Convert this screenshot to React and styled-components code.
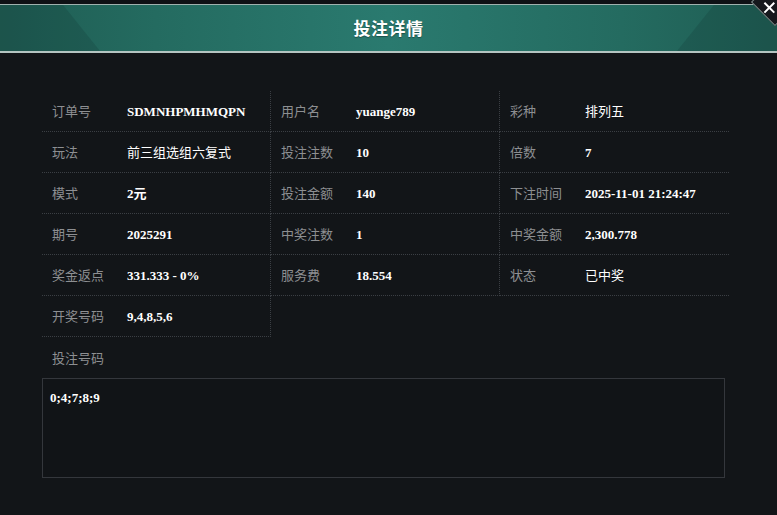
import React from "react";
import styled, { createGlobalStyle } from "styled-components";

const GlobalStyle = createGlobalStyle`
  html, body { margin: 0; padding: 0; background: #121518; }
  body { font-family: "Noto Sans CJK SC", "Noto Sans", sans-serif; }
`;

const Dialog = styled.div`
  position: relative;
  width: 777px;
  height: 515px;
  overflow: hidden;
  background: #121518;
`;

const TopStrip = styled.div`
  height: 4px;
  background: #0f1115;
`;

const Header = styled.div`
  position: relative;
  height: 46px;
  display: flex;
  align-items: center;
  justify-content: center;
  border-top: 1px solid #9fb1ae;
  border-bottom: 2px solid #b4c4c1;
  background: linear-gradient(90deg, #1f5d53 0%, #246b60 20%, #2a7a6f 50%, #246b60 80%, #1f5d53 100%);
  overflow: hidden;

  &::before, &::after {
    content: "";
    position: absolute;
    top: 0;
    bottom: 0;
    width: 110px;
    background: rgba(10, 40, 36, 0.16);
  }
  &::before {
    left: 0;
    clip-path: polygon(0 0, 63px 0, 100px 100%, 0 100%);
  }
  &::after {
    right: 0;
    clip-path: polygon(47px 0, 110px 0, 110px 100%, 10px 100%);
  }
`;

const Title = styled.h1`
  position: relative;
  z-index: 1;
  margin: 0 0 1px;
  font-size: 17px;
  font-weight: 700;
  color: #ffffff;
  letter-spacing: 0.5px;
  text-shadow: 0 1px 1px rgba(0, 0, 0, 0.35);
`;

const CloseButton = styled.button`
  position: absolute;
  left: 758px;
  top: -15px;
  width: 34px;
  height: 34px;
  padding: 0;
  transform: rotate(45deg);
  background: #16181d;
  border: 1px solid #7d8c8a;
  box-sizing: border-box;
  cursor: pointer;
  z-index: 2;
`;

const CloseGlyph = styled.svg`
  position: absolute;
  left: 50%;
  top: 50%;
  width: 16px;
  height: 16px;
  margin-left: -8px;
  margin-top: 0px;
`;

const Body = styled.div`
  padding: 38px 48px 0 42px;
`;

const Grid = styled.div`
  display: grid;
  grid-template-columns: repeat(3, 1fr);
`;

const Cell = styled.div`
  height: 41px;
  line-height: 37px;
  box-sizing: border-box;
  padding-left: 10px;
  white-space: nowrap;
  border-bottom: 1px dotted #3b3f44;
  border-right: ${(p) => (p.$last ? "none" : "1px dotted #3b3f44")};
`;

const Label = styled.span`
  display: inline-block;
  width: 75px;
  font-size: 13px;
  color: #8d8f92;
  font-family: "Noto Sans CJK SC", sans-serif;
`;

const Value = styled.span`
  font-size: 13px;
  color: #ffffff;
  font-weight: ${(p) => (p.$cjk ? 400 : 700)};
  font-family: ${(p) =>
    p.$cjk ? `"Noto Sans CJK SC", sans-serif` : `"Liberation Serif", "Noto Sans CJK SC", serif`};
`;

const SectionLabel = styled.div`
  height: 41px;
  display: flex;
  align-items: center;
  padding-left: 10px;
  font-size: 13px;
  color: #8d8f92;
`;

const NumbersBox = styled.div`
  width: 683px;
  height: 100px;
  box-sizing: border-box;
  border: 1px solid #34373c;
  background: #111417;
  padding: 11px 7px;
  font-family: "Liberation Serif", serif;
  font-weight: 700;
  font-size: 13px;
  color: #ffffff;
`;

const rows = [
  [
    ["订单号", "SDMNHPMHMQPN"],
    ["用户名", "yuange789"],
    ["彩种", "排列五", true],
  ],
  [
    ["玩法", "前三组选组六复式", true],
    ["投注注数", "10"],
    ["倍数", "7"],
  ],
  [
    ["模式", "2元"],
    ["投注金额", "140"],
    ["下注时间", "2025-11-01 21:24:47"],
  ],
  [
    ["期号", "2025291"],
    ["中奖注数", "1"],
    ["中奖金额", "2,300.778"],
  ],
  [
    ["奖金返点", "331.333 - 0%"],
    ["服务费", "18.554"],
    ["状态", "已中奖", true],
  ],
  [["开奖号码", "9,4,8,5,6"]],
];

export default function App() {
  return (
    <>
      <GlobalStyle />
      <Dialog>
        <TopStrip />
        <Header>
          <Title>投注详情</Title>
        </Header>
        <CloseButton aria-label="关闭">
          <CloseGlyph viewBox="0 0 16 16">
            <path d="M8 1 V15 M1 8 H15" stroke="#ffffff" strokeWidth="2" fill="none" />
          </CloseGlyph>
        </CloseButton>
        <Body>
          <Grid>
            {rows.map((row) =>
              row.map(([label, value, cjk], i) => (
                <Cell key={label} $last={i === 2}>
                  <Label>{label}</Label>
                  <Value $cjk={cjk}>{value}</Value>
                </Cell>
              ))
            )}
          </Grid>
          <SectionLabel>投注号码</SectionLabel>
          <NumbersBox>0;4;7;8;9</NumbersBox>
        </Body>
      </Dialog>
    </>
  );
}
